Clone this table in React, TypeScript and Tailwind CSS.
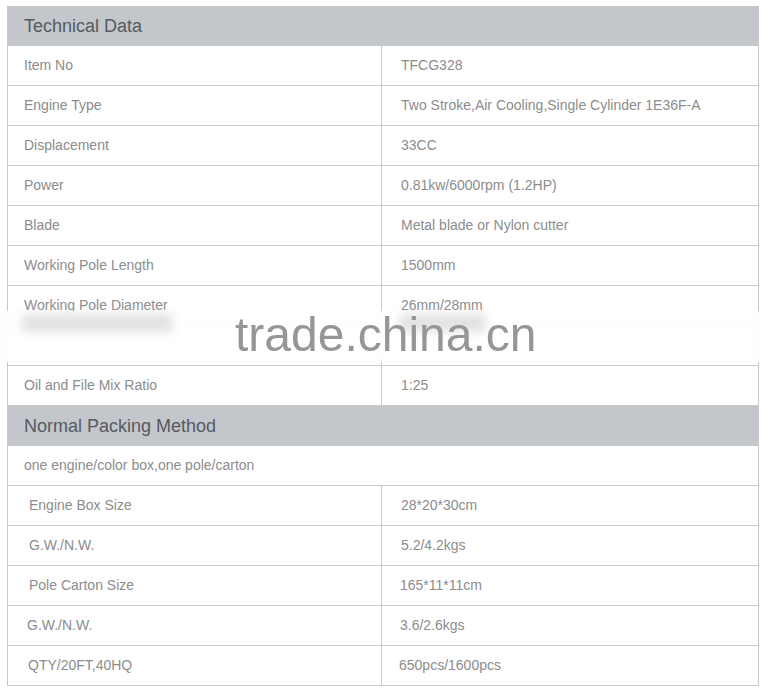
const technical: [string, string][] = [
  ["Item No", "TFCG328"],
  ["Engine Type", "Two Stroke,Air Cooling,Single Cylinder 1E36F-A"],
  ["Displacement", "33CC"],
  ["Power", "0.81kw/6000rpm (1.2HP)"],
  ["Blade", "Metal blade or Nylon cutter"],
  ["Working Pole Length", "1500mm"],
  ["Working Pole Diameter", "26mm/28mm"],
];

const packing: { label: string; value: string; lp: string; rp: string }[] = [
  { label: "Engine Box Size", value: "28*20*30cm", lp: "pl-[21px]", rp: "pl-[19px]" },
  { label: "G.W./N.W.", value: "5.2/4.2kgs", lp: "pl-[21px]", rp: "pl-[19px]" },
  { label: "Pole Carton Size", value: "165*11*11cm", lp: "pl-[21px]", rp: "pl-[18px]" },
  { label: "G.W./N.W.", value: "3.6/2.6kgs", lp: "pl-[19px]", rp: "pl-[18px]" },
  { label: "QTY/20FT,40HQ", value: "650pcs/1600pcs", lp: "pl-[20px]", rp: "pl-[17px]" },
];

const Header = ({ title }: { title: string }) => (
  <div className="h-[40px] bg-[#c3c7cc] pl-[16px] flex items-center text-[18px] text-[#555a60]">
    {title}
  </div>
);

const Row = ({
  label,
  value,
  lp = "pl-[16px]",
  rp = "pl-[19px]",
}: {
  label: string;
  value: string;
  lp?: string;
  rp?: string;
}) => (
  <div className="h-[40px] flex border-b border-[#c9c9c9] text-[14px] text-[#8c8c8c]">
    <div className={`w-[374px] border-r border-[#c9c9c9] flex items-center ${lp}`}>{label}</div>
    <div className={`flex-1 flex items-center ${rp}`}>{value}</div>
  </div>
);

export default function App() {
  return (
    <div
      className="relative w-[768px] h-[700px] bg-white pt-[6px] pl-[7px]"
      style={{ fontFamily: '"Liberation Sans", Arial, sans-serif' }}
    >
      <div className="w-[752px] border-l border-r border-[#c9c9c9]">
        <Header title="Technical Data" />
        {technical.map(([l, v]) => (
          <Row key={l} label={l} value={v} />
        ))}
        {/* row hidden under the watermark */}
        <div className="h-[40px] flex border-b border-[#c9c9c9]">
          <div className="w-[374px] border-r border-[#c9c9c9]" />
          <div className="flex-1" />
        </div>
        <Row label="Oil and File Mix Ratio" value="1:25" />
        <Header title="Normal Packing Method" />
        <div className="h-[40px] flex items-center pl-[16px] border-b border-[#c9c9c9] text-[14px] text-[#8c8c8c]">
          one engine/color box,one pole/carton
        </div>
        {packing.map((p, i) => (
          <Row key={i} label={p.label} value={p.value} lp={p.lp} rp={p.rp} />
        ))}
      </div>

      {/* watermark band */}
      <div className="absolute left-0 right-0 top-[311px] h-[51px] bg-white/80 backdrop-blur-[3px]" />
      <div className="absolute left-[22px] top-[314px] w-[150px] h-[18px] bg-[#d6d6d6] blur-[5px] opacity-70" />
      <div className="absolute left-[400px] top-[314px] w-[86px] h-[18px] bg-[#d6d6d6] blur-[5px] opacity-70" />
      <div className="absolute left-[235px] top-[311px] text-[48px] leading-[48px] text-[#969696]">
        trade.china.cn
      </div>
    </div>
  );
}
